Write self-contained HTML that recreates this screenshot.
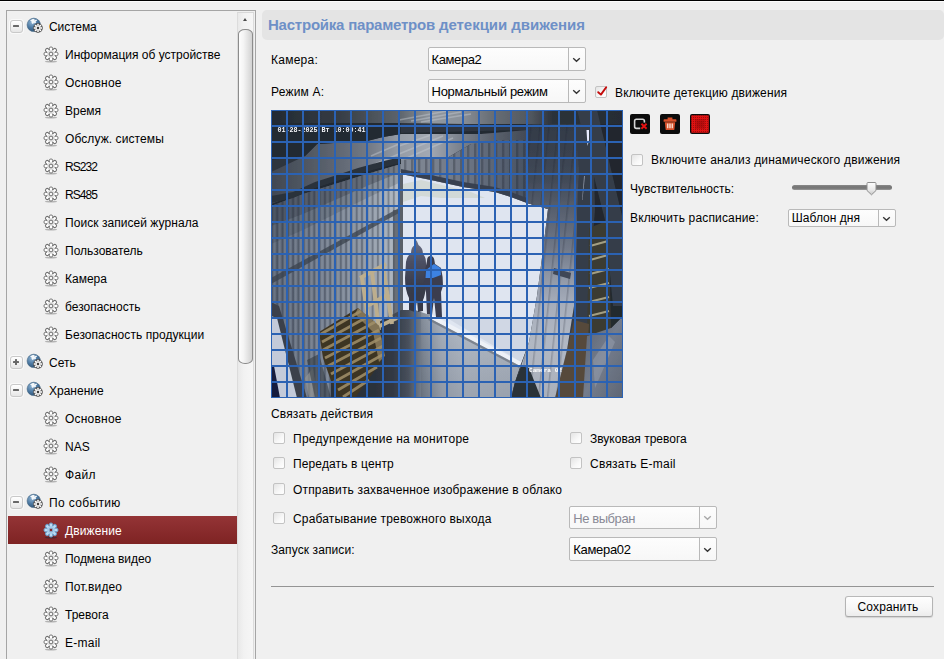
<!DOCTYPE html>
<html>
<head>
<meta charset="utf-8">
<title>Motion detection</title>
<style>
*{box-sizing:border-box;margin:0;padding:0}
html,body{width:944px;height:659px;overflow:hidden;background:#f0f0f0}
body{position:relative;font-family:"Liberation Sans",sans-serif;font-size:12px;color:#000}
.abs{position:absolute}
#topline{left:0;top:0;width:944px;height:1px;background:#000}
#topline2{left:0;top:1px;width:944px;height:1px;background:#fcfcfc}
#tree{left:6px;top:10px;width:250px;height:660px;border:1px solid #a5a5a5;background:#f0f0f0}
.row{position:absolute;left:8px;width:229px;height:28px;line-height:28px;white-space:nowrap;font-size:12px}
.row .t{position:absolute;top:1px}
.row.p .t{left:41px}
.row.c .t{left:57px}
.row.sel{background:linear-gradient(#943436,#7e2323);color:#fff}
.tg{position:absolute;left:1.5px;top:7.5px;width:13px;height:13px;border:1px solid #c9c9c9;border-radius:3px;background:linear-gradient(#ffffff,#f3f3f3 50%,#e6e6e6);box-shadow:0 0 0 1px rgba(255,255,255,.6)}
.tg i{position:absolute;left:2.5px;top:4.5px;width:6px;height:2px;background:#686868;border-radius:.5px}
.tg b{position:absolute;left:4.5px;top:2.5px;width:2px;height:6px;background:#686868;border-radius:.5px}
.gl{position:absolute;left:17px;top:4px;width:20px;height:19px}
.ge{position:absolute;left:35px;top:6px;width:16px;height:17px}
#sbtrack{left:237px;top:12px;width:17px;height:650px;background:linear-gradient(90deg,#e9e9e9,#f2f2f2 40%,#f6f6f6);border-left:1px solid #dcdcdc;border-right:1px solid #dcdcdc}
#sbtop{left:237px;top:12px;width:17px;height:1px;background:#d8d8d8}
#sbthumb{left:238px;top:29px;width:15px;height:335px;border:1px solid #8c8c8c;border-radius:7px/5px;background:linear-gradient(90deg,#fdfdfd,#f4f4f4 35%,#dadada 85%,#d2d2d2)}
#sbarrow{left:243px;top:18px;width:0;height:0;border-left:2.5px solid transparent;border-right:2.5px solid transparent;border-bottom:3px solid #4a4a4a}
#title{left:262px;top:10px;width:682px;height:30px;background:#e4e4e4;border-radius:5px;}
#title span{position:absolute;left:6px;top:0;line-height:30px;font-size:15px;font-weight:bold;color:#6e90c7;white-space:nowrap;letter-spacing:-0.03px}
#title span b{font-weight:bold;letter-spacing:-0.225px}
.lbl{position:absolute;white-space:nowrap;font-size:12px;line-height:14px}
.sel2{position:absolute;height:24px;border:1px solid #b9b9b9;border-radius:2px;background:linear-gradient(#fdfdfd,#f7f7f7)}
.sel2 .v{position:absolute;left:3px;top:0;line-height:22px;font-size:12px;white-space:nowrap}
.sel2 .d{position:absolute;right:16px;top:0;width:1px;height:22px;background:#b9b9b9}
.sel2 .ch{position:absolute;right:4px;width:9px;height:6px;line-height:0}
.sel2 svg{display:block}
.cb{position:absolute;width:12px;height:12px;border:1px solid #c3c3c3;border-radius:2px;background:linear-gradient(135deg,#e4e4e4,#f8f8f8 60%,#fff)}
#cam{left:271px;top:110px;width:352px;height:288px;overflow:hidden;background:#2a3038}
#hr{left:271px;top:586px;width:663px;height:1px;background:#949494}
#save{left:845px;top:596px;width:88px;height:21px;border:1px solid #b4b4b4;border-radius:3px;background:linear-gradient(#fefefe,#f6f6f6 60%,#ececec);text-align:center;line-height:21px;font-size:12px;letter-spacing:.15px;padding-right:2px;box-shadow:0 1px 1px rgba(0,0,0,.12);border-color:#b9b9b9 #b4b4b4 #a8a8a8}
.ib{position:absolute;top:114px;width:20px;height:20px;background:#0c0c0c;border-radius:2px}
</style>
</head>
<body>
<div class="abs" id="topline"></div>
<div class="abs" id="topline2"></div>

<!-- LEFT TREE -->
<div class="abs" id="tree"></div>
<svg width="0" height="0" style="position:absolute"><defs><linearGradient id="gg" x1="0" y1="0" x2="0" y2="1"><stop offset="0" stop-color="#fff"/><stop offset="1" stop-color="#e2e2e2"/></linearGradient><radialGradient id="gb" cx=".35" cy=".3" r=".8"><stop offset="0" stop-color="#8fb3d2"/><stop offset=".5" stop-color="#4d7aa3"/><stop offset="1" stop-color="#2c4d6e"/></radialGradient></defs></svg>
<div class="row p" style="top:12px"><div class="tg"><i></i></div><svg class="gl" viewBox="0 0 20 19" width="20" height="19"><circle cx="8.8" cy="8.9" r="6.7" fill="url(#gb)" stroke="#3e617f" stroke-width=".6"/><path d="M5.0 4.6 L7.6 2.9 L9.6 3.1 L9.2 4.6 L11.2 3.6 L12.2 4.6 L10.6 5.6 L11.2 6.6 L9.6 7.4 L9.0 6.4 L8.0 8.2 L6.6 7.0 L6.6 5.6 Z" fill="#fff" opacity=".92"/><circle cx="13" cy="12" r="4.7" fill="#3a3a3a"/><rect x="11.85" y="7.50" width="2.30" height="2.70" rx="1.00" fill="#ffffff" stroke="#3a3a3a" stroke-width="0.50" transform="rotate(0.0 13.00 12.00)"/><rect x="11.85" y="7.50" width="2.30" height="2.70" rx="1.00" fill="#ffffff" stroke="#3a3a3a" stroke-width="0.50" transform="rotate(45.0 13.00 12.00)"/><rect x="11.85" y="7.50" width="2.30" height="2.70" rx="1.00" fill="#ffffff" stroke="#3a3a3a" stroke-width="0.50" transform="rotate(90.0 13.00 12.00)"/><rect x="11.85" y="7.50" width="2.30" height="2.70" rx="1.00" fill="#ffffff" stroke="#3a3a3a" stroke-width="0.50" transform="rotate(135.0 13.00 12.00)"/><rect x="11.85" y="7.50" width="2.30" height="2.70" rx="1.00" fill="#ffffff" stroke="#3a3a3a" stroke-width="0.50" transform="rotate(180.0 13.00 12.00)"/><rect x="11.85" y="7.50" width="2.30" height="2.70" rx="1.00" fill="#ffffff" stroke="#3a3a3a" stroke-width="0.50" transform="rotate(225.0 13.00 12.00)"/><rect x="11.85" y="7.50" width="2.30" height="2.70" rx="1.00" fill="#ffffff" stroke="#3a3a3a" stroke-width="0.50" transform="rotate(270.0 13.00 12.00)"/><rect x="11.85" y="7.50" width="2.30" height="2.70" rx="1.00" fill="#ffffff" stroke="#3a3a3a" stroke-width="0.50" transform="rotate(315.0 13.00 12.00)"/><circle cx="13" cy="12" r="2.7" fill="#ececec"/><circle cx="13" cy="12" r="1.2" fill="#3c3c3c"/></svg><span class="t" style="letter-spacing:-0.1px">Система</span></div>
<div class="row c" style="top:40px"><svg class="ge" viewBox="0 0 16 17" width="16" height="17"><ellipse cx="8" cy="15.7" rx="6.2" ry="0.9" fill="#000" opacity=".25"/><circle cx="8" cy="8" r="5.6" fill="#707070" opacity=".55"/><rect x="6.30" y="1.00" width="3.40" height="4.40" rx="1.50" fill="#ffffff" stroke="#707070" stroke-width="1.00" transform="rotate(0.0 8.00 8.00)"/><rect x="6.30" y="1.00" width="3.40" height="4.40" rx="1.50" fill="#ffffff" stroke="#707070" stroke-width="1.00" transform="rotate(45.0 8.00 8.00)"/><rect x="6.30" y="1.00" width="3.40" height="4.40" rx="1.50" fill="#ffffff" stroke="#707070" stroke-width="1.00" transform="rotate(90.0 8.00 8.00)"/><rect x="6.30" y="1.00" width="3.40" height="4.40" rx="1.50" fill="#ffffff" stroke="#707070" stroke-width="1.00" transform="rotate(135.0 8.00 8.00)"/><rect x="6.30" y="1.00" width="3.40" height="4.40" rx="1.50" fill="#ffffff" stroke="#707070" stroke-width="1.00" transform="rotate(180.0 8.00 8.00)"/><rect x="6.30" y="1.00" width="3.40" height="4.40" rx="1.50" fill="#ffffff" stroke="#707070" stroke-width="1.00" transform="rotate(225.0 8.00 8.00)"/><rect x="6.30" y="1.00" width="3.40" height="4.40" rx="1.50" fill="#ffffff" stroke="#707070" stroke-width="1.00" transform="rotate(270.0 8.00 8.00)"/><rect x="6.30" y="1.00" width="3.40" height="4.40" rx="1.50" fill="#ffffff" stroke="#707070" stroke-width="1.00" transform="rotate(315.0 8.00 8.00)"/><circle cx="8" cy="8" r="3.9" fill="#e4e4e4"/><circle cx="8" cy="8" r="1.9" fill="#f6f6f6" stroke="#6a6a6a" stroke-width="1"/></svg><span class="t" style="letter-spacing:0px">Информация об устройстве</span></div>
<div class="row c" style="top:68px"><svg class="ge" viewBox="0 0 16 17" width="16" height="17"><ellipse cx="8" cy="15.7" rx="6.2" ry="0.9" fill="#000" opacity=".25"/><circle cx="8" cy="8" r="5.6" fill="#707070" opacity=".55"/><rect x="6.30" y="1.00" width="3.40" height="4.40" rx="1.50" fill="#ffffff" stroke="#707070" stroke-width="1.00" transform="rotate(0.0 8.00 8.00)"/><rect x="6.30" y="1.00" width="3.40" height="4.40" rx="1.50" fill="#ffffff" stroke="#707070" stroke-width="1.00" transform="rotate(45.0 8.00 8.00)"/><rect x="6.30" y="1.00" width="3.40" height="4.40" rx="1.50" fill="#ffffff" stroke="#707070" stroke-width="1.00" transform="rotate(90.0 8.00 8.00)"/><rect x="6.30" y="1.00" width="3.40" height="4.40" rx="1.50" fill="#ffffff" stroke="#707070" stroke-width="1.00" transform="rotate(135.0 8.00 8.00)"/><rect x="6.30" y="1.00" width="3.40" height="4.40" rx="1.50" fill="#ffffff" stroke="#707070" stroke-width="1.00" transform="rotate(180.0 8.00 8.00)"/><rect x="6.30" y="1.00" width="3.40" height="4.40" rx="1.50" fill="#ffffff" stroke="#707070" stroke-width="1.00" transform="rotate(225.0 8.00 8.00)"/><rect x="6.30" y="1.00" width="3.40" height="4.40" rx="1.50" fill="#ffffff" stroke="#707070" stroke-width="1.00" transform="rotate(270.0 8.00 8.00)"/><rect x="6.30" y="1.00" width="3.40" height="4.40" rx="1.50" fill="#ffffff" stroke="#707070" stroke-width="1.00" transform="rotate(315.0 8.00 8.00)"/><circle cx="8" cy="8" r="3.9" fill="#e4e4e4"/><circle cx="8" cy="8" r="1.9" fill="#f6f6f6" stroke="#6a6a6a" stroke-width="1"/></svg><span class="t" style="letter-spacing:0.22px">Основное</span></div>
<div class="row c" style="top:96px"><svg class="ge" viewBox="0 0 16 17" width="16" height="17"><ellipse cx="8" cy="15.7" rx="6.2" ry="0.9" fill="#000" opacity=".25"/><circle cx="8" cy="8" r="5.6" fill="#707070" opacity=".55"/><rect x="6.30" y="1.00" width="3.40" height="4.40" rx="1.50" fill="#ffffff" stroke="#707070" stroke-width="1.00" transform="rotate(0.0 8.00 8.00)"/><rect x="6.30" y="1.00" width="3.40" height="4.40" rx="1.50" fill="#ffffff" stroke="#707070" stroke-width="1.00" transform="rotate(45.0 8.00 8.00)"/><rect x="6.30" y="1.00" width="3.40" height="4.40" rx="1.50" fill="#ffffff" stroke="#707070" stroke-width="1.00" transform="rotate(90.0 8.00 8.00)"/><rect x="6.30" y="1.00" width="3.40" height="4.40" rx="1.50" fill="#ffffff" stroke="#707070" stroke-width="1.00" transform="rotate(135.0 8.00 8.00)"/><rect x="6.30" y="1.00" width="3.40" height="4.40" rx="1.50" fill="#ffffff" stroke="#707070" stroke-width="1.00" transform="rotate(180.0 8.00 8.00)"/><rect x="6.30" y="1.00" width="3.40" height="4.40" rx="1.50" fill="#ffffff" stroke="#707070" stroke-width="1.00" transform="rotate(225.0 8.00 8.00)"/><rect x="6.30" y="1.00" width="3.40" height="4.40" rx="1.50" fill="#ffffff" stroke="#707070" stroke-width="1.00" transform="rotate(270.0 8.00 8.00)"/><rect x="6.30" y="1.00" width="3.40" height="4.40" rx="1.50" fill="#ffffff" stroke="#707070" stroke-width="1.00" transform="rotate(315.0 8.00 8.00)"/><circle cx="8" cy="8" r="3.9" fill="#e4e4e4"/><circle cx="8" cy="8" r="1.9" fill="#f6f6f6" stroke="#6a6a6a" stroke-width="1"/></svg><span class="t" style="letter-spacing:0px">Время</span></div>
<div class="row c" style="top:124px"><svg class="ge" viewBox="0 0 16 17" width="16" height="17"><ellipse cx="8" cy="15.7" rx="6.2" ry="0.9" fill="#000" opacity=".25"/><circle cx="8" cy="8" r="5.6" fill="#707070" opacity=".55"/><rect x="6.30" y="1.00" width="3.40" height="4.40" rx="1.50" fill="#ffffff" stroke="#707070" stroke-width="1.00" transform="rotate(0.0 8.00 8.00)"/><rect x="6.30" y="1.00" width="3.40" height="4.40" rx="1.50" fill="#ffffff" stroke="#707070" stroke-width="1.00" transform="rotate(45.0 8.00 8.00)"/><rect x="6.30" y="1.00" width="3.40" height="4.40" rx="1.50" fill="#ffffff" stroke="#707070" stroke-width="1.00" transform="rotate(90.0 8.00 8.00)"/><rect x="6.30" y="1.00" width="3.40" height="4.40" rx="1.50" fill="#ffffff" stroke="#707070" stroke-width="1.00" transform="rotate(135.0 8.00 8.00)"/><rect x="6.30" y="1.00" width="3.40" height="4.40" rx="1.50" fill="#ffffff" stroke="#707070" stroke-width="1.00" transform="rotate(180.0 8.00 8.00)"/><rect x="6.30" y="1.00" width="3.40" height="4.40" rx="1.50" fill="#ffffff" stroke="#707070" stroke-width="1.00" transform="rotate(225.0 8.00 8.00)"/><rect x="6.30" y="1.00" width="3.40" height="4.40" rx="1.50" fill="#ffffff" stroke="#707070" stroke-width="1.00" transform="rotate(270.0 8.00 8.00)"/><rect x="6.30" y="1.00" width="3.40" height="4.40" rx="1.50" fill="#ffffff" stroke="#707070" stroke-width="1.00" transform="rotate(315.0 8.00 8.00)"/><circle cx="8" cy="8" r="3.9" fill="#e4e4e4"/><circle cx="8" cy="8" r="1.9" fill="#f6f6f6" stroke="#6a6a6a" stroke-width="1"/></svg><span class="t" style="letter-spacing:0.09px">Обслуж. системы</span></div>
<div class="row c" style="top:152px"><svg class="ge" viewBox="0 0 16 17" width="16" height="17"><ellipse cx="8" cy="15.7" rx="6.2" ry="0.9" fill="#000" opacity=".25"/><circle cx="8" cy="8" r="5.6" fill="#707070" opacity=".55"/><rect x="6.30" y="1.00" width="3.40" height="4.40" rx="1.50" fill="#ffffff" stroke="#707070" stroke-width="1.00" transform="rotate(0.0 8.00 8.00)"/><rect x="6.30" y="1.00" width="3.40" height="4.40" rx="1.50" fill="#ffffff" stroke="#707070" stroke-width="1.00" transform="rotate(45.0 8.00 8.00)"/><rect x="6.30" y="1.00" width="3.40" height="4.40" rx="1.50" fill="#ffffff" stroke="#707070" stroke-width="1.00" transform="rotate(90.0 8.00 8.00)"/><rect x="6.30" y="1.00" width="3.40" height="4.40" rx="1.50" fill="#ffffff" stroke="#707070" stroke-width="1.00" transform="rotate(135.0 8.00 8.00)"/><rect x="6.30" y="1.00" width="3.40" height="4.40" rx="1.50" fill="#ffffff" stroke="#707070" stroke-width="1.00" transform="rotate(180.0 8.00 8.00)"/><rect x="6.30" y="1.00" width="3.40" height="4.40" rx="1.50" fill="#ffffff" stroke="#707070" stroke-width="1.00" transform="rotate(225.0 8.00 8.00)"/><rect x="6.30" y="1.00" width="3.40" height="4.40" rx="1.50" fill="#ffffff" stroke="#707070" stroke-width="1.00" transform="rotate(270.0 8.00 8.00)"/><rect x="6.30" y="1.00" width="3.40" height="4.40" rx="1.50" fill="#ffffff" stroke="#707070" stroke-width="1.00" transform="rotate(315.0 8.00 8.00)"/><circle cx="8" cy="8" r="3.9" fill="#e4e4e4"/><circle cx="8" cy="8" r="1.9" fill="#f6f6f6" stroke="#6a6a6a" stroke-width="1"/></svg><span class="t" style="letter-spacing:-0.95px">RS232</span></div>
<div class="row c" style="top:180px"><svg class="ge" viewBox="0 0 16 17" width="16" height="17"><ellipse cx="8" cy="15.7" rx="6.2" ry="0.9" fill="#000" opacity=".25"/><circle cx="8" cy="8" r="5.6" fill="#707070" opacity=".55"/><rect x="6.30" y="1.00" width="3.40" height="4.40" rx="1.50" fill="#ffffff" stroke="#707070" stroke-width="1.00" transform="rotate(0.0 8.00 8.00)"/><rect x="6.30" y="1.00" width="3.40" height="4.40" rx="1.50" fill="#ffffff" stroke="#707070" stroke-width="1.00" transform="rotate(45.0 8.00 8.00)"/><rect x="6.30" y="1.00" width="3.40" height="4.40" rx="1.50" fill="#ffffff" stroke="#707070" stroke-width="1.00" transform="rotate(90.0 8.00 8.00)"/><rect x="6.30" y="1.00" width="3.40" height="4.40" rx="1.50" fill="#ffffff" stroke="#707070" stroke-width="1.00" transform="rotate(135.0 8.00 8.00)"/><rect x="6.30" y="1.00" width="3.40" height="4.40" rx="1.50" fill="#ffffff" stroke="#707070" stroke-width="1.00" transform="rotate(180.0 8.00 8.00)"/><rect x="6.30" y="1.00" width="3.40" height="4.40" rx="1.50" fill="#ffffff" stroke="#707070" stroke-width="1.00" transform="rotate(225.0 8.00 8.00)"/><rect x="6.30" y="1.00" width="3.40" height="4.40" rx="1.50" fill="#ffffff" stroke="#707070" stroke-width="1.00" transform="rotate(270.0 8.00 8.00)"/><rect x="6.30" y="1.00" width="3.40" height="4.40" rx="1.50" fill="#ffffff" stroke="#707070" stroke-width="1.00" transform="rotate(315.0 8.00 8.00)"/><circle cx="8" cy="8" r="3.9" fill="#e4e4e4"/><circle cx="8" cy="8" r="1.9" fill="#f6f6f6" stroke="#6a6a6a" stroke-width="1"/></svg><span class="t" style="letter-spacing:-0.95px">RS485</span></div>
<div class="row c" style="top:208px"><svg class="ge" viewBox="0 0 16 17" width="16" height="17"><ellipse cx="8" cy="15.7" rx="6.2" ry="0.9" fill="#000" opacity=".25"/><circle cx="8" cy="8" r="5.6" fill="#707070" opacity=".55"/><rect x="6.30" y="1.00" width="3.40" height="4.40" rx="1.50" fill="#ffffff" stroke="#707070" stroke-width="1.00" transform="rotate(0.0 8.00 8.00)"/><rect x="6.30" y="1.00" width="3.40" height="4.40" rx="1.50" fill="#ffffff" stroke="#707070" stroke-width="1.00" transform="rotate(45.0 8.00 8.00)"/><rect x="6.30" y="1.00" width="3.40" height="4.40" rx="1.50" fill="#ffffff" stroke="#707070" stroke-width="1.00" transform="rotate(90.0 8.00 8.00)"/><rect x="6.30" y="1.00" width="3.40" height="4.40" rx="1.50" fill="#ffffff" stroke="#707070" stroke-width="1.00" transform="rotate(135.0 8.00 8.00)"/><rect x="6.30" y="1.00" width="3.40" height="4.40" rx="1.50" fill="#ffffff" stroke="#707070" stroke-width="1.00" transform="rotate(180.0 8.00 8.00)"/><rect x="6.30" y="1.00" width="3.40" height="4.40" rx="1.50" fill="#ffffff" stroke="#707070" stroke-width="1.00" transform="rotate(225.0 8.00 8.00)"/><rect x="6.30" y="1.00" width="3.40" height="4.40" rx="1.50" fill="#ffffff" stroke="#707070" stroke-width="1.00" transform="rotate(270.0 8.00 8.00)"/><rect x="6.30" y="1.00" width="3.40" height="4.40" rx="1.50" fill="#ffffff" stroke="#707070" stroke-width="1.00" transform="rotate(315.0 8.00 8.00)"/><circle cx="8" cy="8" r="3.9" fill="#e4e4e4"/><circle cx="8" cy="8" r="1.9" fill="#f6f6f6" stroke="#6a6a6a" stroke-width="1"/></svg><span class="t" style="letter-spacing:0.05px">Поиск записей журнала</span></div>
<div class="row c" style="top:236px"><svg class="ge" viewBox="0 0 16 17" width="16" height="17"><ellipse cx="8" cy="15.7" rx="6.2" ry="0.9" fill="#000" opacity=".25"/><circle cx="8" cy="8" r="5.6" fill="#707070" opacity=".55"/><rect x="6.30" y="1.00" width="3.40" height="4.40" rx="1.50" fill="#ffffff" stroke="#707070" stroke-width="1.00" transform="rotate(0.0 8.00 8.00)"/><rect x="6.30" y="1.00" width="3.40" height="4.40" rx="1.50" fill="#ffffff" stroke="#707070" stroke-width="1.00" transform="rotate(45.0 8.00 8.00)"/><rect x="6.30" y="1.00" width="3.40" height="4.40" rx="1.50" fill="#ffffff" stroke="#707070" stroke-width="1.00" transform="rotate(90.0 8.00 8.00)"/><rect x="6.30" y="1.00" width="3.40" height="4.40" rx="1.50" fill="#ffffff" stroke="#707070" stroke-width="1.00" transform="rotate(135.0 8.00 8.00)"/><rect x="6.30" y="1.00" width="3.40" height="4.40" rx="1.50" fill="#ffffff" stroke="#707070" stroke-width="1.00" transform="rotate(180.0 8.00 8.00)"/><rect x="6.30" y="1.00" width="3.40" height="4.40" rx="1.50" fill="#ffffff" stroke="#707070" stroke-width="1.00" transform="rotate(225.0 8.00 8.00)"/><rect x="6.30" y="1.00" width="3.40" height="4.40" rx="1.50" fill="#ffffff" stroke="#707070" stroke-width="1.00" transform="rotate(270.0 8.00 8.00)"/><rect x="6.30" y="1.00" width="3.40" height="4.40" rx="1.50" fill="#ffffff" stroke="#707070" stroke-width="1.00" transform="rotate(315.0 8.00 8.00)"/><circle cx="8" cy="8" r="3.9" fill="#e4e4e4"/><circle cx="8" cy="8" r="1.9" fill="#f6f6f6" stroke="#6a6a6a" stroke-width="1"/></svg><span class="t" style="letter-spacing:0px">Пользователь</span></div>
<div class="row c" style="top:264px"><svg class="ge" viewBox="0 0 16 17" width="16" height="17"><ellipse cx="8" cy="15.7" rx="6.2" ry="0.9" fill="#000" opacity=".25"/><circle cx="8" cy="8" r="5.6" fill="#707070" opacity=".55"/><rect x="6.30" y="1.00" width="3.40" height="4.40" rx="1.50" fill="#ffffff" stroke="#707070" stroke-width="1.00" transform="rotate(0.0 8.00 8.00)"/><rect x="6.30" y="1.00" width="3.40" height="4.40" rx="1.50" fill="#ffffff" stroke="#707070" stroke-width="1.00" transform="rotate(45.0 8.00 8.00)"/><rect x="6.30" y="1.00" width="3.40" height="4.40" rx="1.50" fill="#ffffff" stroke="#707070" stroke-width="1.00" transform="rotate(90.0 8.00 8.00)"/><rect x="6.30" y="1.00" width="3.40" height="4.40" rx="1.50" fill="#ffffff" stroke="#707070" stroke-width="1.00" transform="rotate(135.0 8.00 8.00)"/><rect x="6.30" y="1.00" width="3.40" height="4.40" rx="1.50" fill="#ffffff" stroke="#707070" stroke-width="1.00" transform="rotate(180.0 8.00 8.00)"/><rect x="6.30" y="1.00" width="3.40" height="4.40" rx="1.50" fill="#ffffff" stroke="#707070" stroke-width="1.00" transform="rotate(225.0 8.00 8.00)"/><rect x="6.30" y="1.00" width="3.40" height="4.40" rx="1.50" fill="#ffffff" stroke="#707070" stroke-width="1.00" transform="rotate(270.0 8.00 8.00)"/><rect x="6.30" y="1.00" width="3.40" height="4.40" rx="1.50" fill="#ffffff" stroke="#707070" stroke-width="1.00" transform="rotate(315.0 8.00 8.00)"/><circle cx="8" cy="8" r="3.9" fill="#e4e4e4"/><circle cx="8" cy="8" r="1.9" fill="#f6f6f6" stroke="#6a6a6a" stroke-width="1"/></svg><span class="t" style="letter-spacing:0px">Камера</span></div>
<div class="row c" style="top:292px"><svg class="ge" viewBox="0 0 16 17" width="16" height="17"><ellipse cx="8" cy="15.7" rx="6.2" ry="0.9" fill="#000" opacity=".25"/><circle cx="8" cy="8" r="5.6" fill="#707070" opacity=".55"/><rect x="6.30" y="1.00" width="3.40" height="4.40" rx="1.50" fill="#ffffff" stroke="#707070" stroke-width="1.00" transform="rotate(0.0 8.00 8.00)"/><rect x="6.30" y="1.00" width="3.40" height="4.40" rx="1.50" fill="#ffffff" stroke="#707070" stroke-width="1.00" transform="rotate(45.0 8.00 8.00)"/><rect x="6.30" y="1.00" width="3.40" height="4.40" rx="1.50" fill="#ffffff" stroke="#707070" stroke-width="1.00" transform="rotate(90.0 8.00 8.00)"/><rect x="6.30" y="1.00" width="3.40" height="4.40" rx="1.50" fill="#ffffff" stroke="#707070" stroke-width="1.00" transform="rotate(135.0 8.00 8.00)"/><rect x="6.30" y="1.00" width="3.40" height="4.40" rx="1.50" fill="#ffffff" stroke="#707070" stroke-width="1.00" transform="rotate(180.0 8.00 8.00)"/><rect x="6.30" y="1.00" width="3.40" height="4.40" rx="1.50" fill="#ffffff" stroke="#707070" stroke-width="1.00" transform="rotate(225.0 8.00 8.00)"/><rect x="6.30" y="1.00" width="3.40" height="4.40" rx="1.50" fill="#ffffff" stroke="#707070" stroke-width="1.00" transform="rotate(270.0 8.00 8.00)"/><rect x="6.30" y="1.00" width="3.40" height="4.40" rx="1.50" fill="#ffffff" stroke="#707070" stroke-width="1.00" transform="rotate(315.0 8.00 8.00)"/><circle cx="8" cy="8" r="3.9" fill="#e4e4e4"/><circle cx="8" cy="8" r="1.9" fill="#f6f6f6" stroke="#6a6a6a" stroke-width="1"/></svg><span class="t" style="letter-spacing:0px">безопасность</span></div>
<div class="row c" style="top:320px"><svg class="ge" viewBox="0 0 16 17" width="16" height="17"><ellipse cx="8" cy="15.7" rx="6.2" ry="0.9" fill="#000" opacity=".25"/><circle cx="8" cy="8" r="5.6" fill="#707070" opacity=".55"/><rect x="6.30" y="1.00" width="3.40" height="4.40" rx="1.50" fill="#ffffff" stroke="#707070" stroke-width="1.00" transform="rotate(0.0 8.00 8.00)"/><rect x="6.30" y="1.00" width="3.40" height="4.40" rx="1.50" fill="#ffffff" stroke="#707070" stroke-width="1.00" transform="rotate(45.0 8.00 8.00)"/><rect x="6.30" y="1.00" width="3.40" height="4.40" rx="1.50" fill="#ffffff" stroke="#707070" stroke-width="1.00" transform="rotate(90.0 8.00 8.00)"/><rect x="6.30" y="1.00" width="3.40" height="4.40" rx="1.50" fill="#ffffff" stroke="#707070" stroke-width="1.00" transform="rotate(135.0 8.00 8.00)"/><rect x="6.30" y="1.00" width="3.40" height="4.40" rx="1.50" fill="#ffffff" stroke="#707070" stroke-width="1.00" transform="rotate(180.0 8.00 8.00)"/><rect x="6.30" y="1.00" width="3.40" height="4.40" rx="1.50" fill="#ffffff" stroke="#707070" stroke-width="1.00" transform="rotate(225.0 8.00 8.00)"/><rect x="6.30" y="1.00" width="3.40" height="4.40" rx="1.50" fill="#ffffff" stroke="#707070" stroke-width="1.00" transform="rotate(270.0 8.00 8.00)"/><rect x="6.30" y="1.00" width="3.40" height="4.40" rx="1.50" fill="#ffffff" stroke="#707070" stroke-width="1.00" transform="rotate(315.0 8.00 8.00)"/><circle cx="8" cy="8" r="3.9" fill="#e4e4e4"/><circle cx="8" cy="8" r="1.9" fill="#f6f6f6" stroke="#6a6a6a" stroke-width="1"/></svg><span class="t" style="letter-spacing:0.06px">Безопасность продукции</span></div>
<div class="row p" style="top:348px"><div class="tg"><i></i><b></b></div><svg class="gl" viewBox="0 0 20 19" width="20" height="19"><circle cx="8.8" cy="8.9" r="6.7" fill="url(#gb)" stroke="#3e617f" stroke-width=".6"/><path d="M5.0 4.6 L7.6 2.9 L9.6 3.1 L9.2 4.6 L11.2 3.6 L12.2 4.6 L10.6 5.6 L11.2 6.6 L9.6 7.4 L9.0 6.4 L8.0 8.2 L6.6 7.0 L6.6 5.6 Z" fill="#fff" opacity=".92"/><circle cx="13" cy="12" r="4.7" fill="#3a3a3a"/><rect x="11.85" y="7.50" width="2.30" height="2.70" rx="1.00" fill="#ffffff" stroke="#3a3a3a" stroke-width="0.50" transform="rotate(0.0 13.00 12.00)"/><rect x="11.85" y="7.50" width="2.30" height="2.70" rx="1.00" fill="#ffffff" stroke="#3a3a3a" stroke-width="0.50" transform="rotate(45.0 13.00 12.00)"/><rect x="11.85" y="7.50" width="2.30" height="2.70" rx="1.00" fill="#ffffff" stroke="#3a3a3a" stroke-width="0.50" transform="rotate(90.0 13.00 12.00)"/><rect x="11.85" y="7.50" width="2.30" height="2.70" rx="1.00" fill="#ffffff" stroke="#3a3a3a" stroke-width="0.50" transform="rotate(135.0 13.00 12.00)"/><rect x="11.85" y="7.50" width="2.30" height="2.70" rx="1.00" fill="#ffffff" stroke="#3a3a3a" stroke-width="0.50" transform="rotate(180.0 13.00 12.00)"/><rect x="11.85" y="7.50" width="2.30" height="2.70" rx="1.00" fill="#ffffff" stroke="#3a3a3a" stroke-width="0.50" transform="rotate(225.0 13.00 12.00)"/><rect x="11.85" y="7.50" width="2.30" height="2.70" rx="1.00" fill="#ffffff" stroke="#3a3a3a" stroke-width="0.50" transform="rotate(270.0 13.00 12.00)"/><rect x="11.85" y="7.50" width="2.30" height="2.70" rx="1.00" fill="#ffffff" stroke="#3a3a3a" stroke-width="0.50" transform="rotate(315.0 13.00 12.00)"/><circle cx="13" cy="12" r="2.7" fill="#ececec"/><circle cx="13" cy="12" r="1.2" fill="#3c3c3c"/></svg><span class="t" style="letter-spacing:0px">Сеть</span></div>
<div class="row p" style="top:376px"><div class="tg"><i></i></div><svg class="gl" viewBox="0 0 20 19" width="20" height="19"><circle cx="8.8" cy="8.9" r="6.7" fill="url(#gb)" stroke="#3e617f" stroke-width=".6"/><path d="M5.0 4.6 L7.6 2.9 L9.6 3.1 L9.2 4.6 L11.2 3.6 L12.2 4.6 L10.6 5.6 L11.2 6.6 L9.6 7.4 L9.0 6.4 L8.0 8.2 L6.6 7.0 L6.6 5.6 Z" fill="#fff" opacity=".92"/><circle cx="13" cy="12" r="4.7" fill="#3a3a3a"/><rect x="11.85" y="7.50" width="2.30" height="2.70" rx="1.00" fill="#ffffff" stroke="#3a3a3a" stroke-width="0.50" transform="rotate(0.0 13.00 12.00)"/><rect x="11.85" y="7.50" width="2.30" height="2.70" rx="1.00" fill="#ffffff" stroke="#3a3a3a" stroke-width="0.50" transform="rotate(45.0 13.00 12.00)"/><rect x="11.85" y="7.50" width="2.30" height="2.70" rx="1.00" fill="#ffffff" stroke="#3a3a3a" stroke-width="0.50" transform="rotate(90.0 13.00 12.00)"/><rect x="11.85" y="7.50" width="2.30" height="2.70" rx="1.00" fill="#ffffff" stroke="#3a3a3a" stroke-width="0.50" transform="rotate(135.0 13.00 12.00)"/><rect x="11.85" y="7.50" width="2.30" height="2.70" rx="1.00" fill="#ffffff" stroke="#3a3a3a" stroke-width="0.50" transform="rotate(180.0 13.00 12.00)"/><rect x="11.85" y="7.50" width="2.30" height="2.70" rx="1.00" fill="#ffffff" stroke="#3a3a3a" stroke-width="0.50" transform="rotate(225.0 13.00 12.00)"/><rect x="11.85" y="7.50" width="2.30" height="2.70" rx="1.00" fill="#ffffff" stroke="#3a3a3a" stroke-width="0.50" transform="rotate(270.0 13.00 12.00)"/><rect x="11.85" y="7.50" width="2.30" height="2.70" rx="1.00" fill="#ffffff" stroke="#3a3a3a" stroke-width="0.50" transform="rotate(315.0 13.00 12.00)"/><circle cx="13" cy="12" r="2.7" fill="#ececec"/><circle cx="13" cy="12" r="1.2" fill="#3c3c3c"/></svg><span class="t" style="letter-spacing:0px">Хранение</span></div>
<div class="row c" style="top:404px"><svg class="ge" viewBox="0 0 16 17" width="16" height="17"><ellipse cx="8" cy="15.7" rx="6.2" ry="0.9" fill="#000" opacity=".25"/><circle cx="8" cy="8" r="5.6" fill="#707070" opacity=".55"/><rect x="6.30" y="1.00" width="3.40" height="4.40" rx="1.50" fill="#ffffff" stroke="#707070" stroke-width="1.00" transform="rotate(0.0 8.00 8.00)"/><rect x="6.30" y="1.00" width="3.40" height="4.40" rx="1.50" fill="#ffffff" stroke="#707070" stroke-width="1.00" transform="rotate(45.0 8.00 8.00)"/><rect x="6.30" y="1.00" width="3.40" height="4.40" rx="1.50" fill="#ffffff" stroke="#707070" stroke-width="1.00" transform="rotate(90.0 8.00 8.00)"/><rect x="6.30" y="1.00" width="3.40" height="4.40" rx="1.50" fill="#ffffff" stroke="#707070" stroke-width="1.00" transform="rotate(135.0 8.00 8.00)"/><rect x="6.30" y="1.00" width="3.40" height="4.40" rx="1.50" fill="#ffffff" stroke="#707070" stroke-width="1.00" transform="rotate(180.0 8.00 8.00)"/><rect x="6.30" y="1.00" width="3.40" height="4.40" rx="1.50" fill="#ffffff" stroke="#707070" stroke-width="1.00" transform="rotate(225.0 8.00 8.00)"/><rect x="6.30" y="1.00" width="3.40" height="4.40" rx="1.50" fill="#ffffff" stroke="#707070" stroke-width="1.00" transform="rotate(270.0 8.00 8.00)"/><rect x="6.30" y="1.00" width="3.40" height="4.40" rx="1.50" fill="#ffffff" stroke="#707070" stroke-width="1.00" transform="rotate(315.0 8.00 8.00)"/><circle cx="8" cy="8" r="3.9" fill="#e4e4e4"/><circle cx="8" cy="8" r="1.9" fill="#f6f6f6" stroke="#6a6a6a" stroke-width="1"/></svg><span class="t" style="letter-spacing:0.22px">Основное</span></div>
<div class="row c" style="top:432px"><svg class="ge" viewBox="0 0 16 17" width="16" height="17"><ellipse cx="8" cy="15.7" rx="6.2" ry="0.9" fill="#000" opacity=".25"/><circle cx="8" cy="8" r="5.6" fill="#707070" opacity=".55"/><rect x="6.30" y="1.00" width="3.40" height="4.40" rx="1.50" fill="#ffffff" stroke="#707070" stroke-width="1.00" transform="rotate(0.0 8.00 8.00)"/><rect x="6.30" y="1.00" width="3.40" height="4.40" rx="1.50" fill="#ffffff" stroke="#707070" stroke-width="1.00" transform="rotate(45.0 8.00 8.00)"/><rect x="6.30" y="1.00" width="3.40" height="4.40" rx="1.50" fill="#ffffff" stroke="#707070" stroke-width="1.00" transform="rotate(90.0 8.00 8.00)"/><rect x="6.30" y="1.00" width="3.40" height="4.40" rx="1.50" fill="#ffffff" stroke="#707070" stroke-width="1.00" transform="rotate(135.0 8.00 8.00)"/><rect x="6.30" y="1.00" width="3.40" height="4.40" rx="1.50" fill="#ffffff" stroke="#707070" stroke-width="1.00" transform="rotate(180.0 8.00 8.00)"/><rect x="6.30" y="1.00" width="3.40" height="4.40" rx="1.50" fill="#ffffff" stroke="#707070" stroke-width="1.00" transform="rotate(225.0 8.00 8.00)"/><rect x="6.30" y="1.00" width="3.40" height="4.40" rx="1.50" fill="#ffffff" stroke="#707070" stroke-width="1.00" transform="rotate(270.0 8.00 8.00)"/><rect x="6.30" y="1.00" width="3.40" height="4.40" rx="1.50" fill="#ffffff" stroke="#707070" stroke-width="1.00" transform="rotate(315.0 8.00 8.00)"/><circle cx="8" cy="8" r="3.9" fill="#e4e4e4"/><circle cx="8" cy="8" r="1.9" fill="#f6f6f6" stroke="#6a6a6a" stroke-width="1"/></svg><span class="t" style="letter-spacing:0px">NAS</span></div>
<div class="row c" style="top:460px"><svg class="ge" viewBox="0 0 16 17" width="16" height="17"><ellipse cx="8" cy="15.7" rx="6.2" ry="0.9" fill="#000" opacity=".25"/><circle cx="8" cy="8" r="5.6" fill="#707070" opacity=".55"/><rect x="6.30" y="1.00" width="3.40" height="4.40" rx="1.50" fill="#ffffff" stroke="#707070" stroke-width="1.00" transform="rotate(0.0 8.00 8.00)"/><rect x="6.30" y="1.00" width="3.40" height="4.40" rx="1.50" fill="#ffffff" stroke="#707070" stroke-width="1.00" transform="rotate(45.0 8.00 8.00)"/><rect x="6.30" y="1.00" width="3.40" height="4.40" rx="1.50" fill="#ffffff" stroke="#707070" stroke-width="1.00" transform="rotate(90.0 8.00 8.00)"/><rect x="6.30" y="1.00" width="3.40" height="4.40" rx="1.50" fill="#ffffff" stroke="#707070" stroke-width="1.00" transform="rotate(135.0 8.00 8.00)"/><rect x="6.30" y="1.00" width="3.40" height="4.40" rx="1.50" fill="#ffffff" stroke="#707070" stroke-width="1.00" transform="rotate(180.0 8.00 8.00)"/><rect x="6.30" y="1.00" width="3.40" height="4.40" rx="1.50" fill="#ffffff" stroke="#707070" stroke-width="1.00" transform="rotate(225.0 8.00 8.00)"/><rect x="6.30" y="1.00" width="3.40" height="4.40" rx="1.50" fill="#ffffff" stroke="#707070" stroke-width="1.00" transform="rotate(270.0 8.00 8.00)"/><rect x="6.30" y="1.00" width="3.40" height="4.40" rx="1.50" fill="#ffffff" stroke="#707070" stroke-width="1.00" transform="rotate(315.0 8.00 8.00)"/><circle cx="8" cy="8" r="3.9" fill="#e4e4e4"/><circle cx="8" cy="8" r="1.9" fill="#f6f6f6" stroke="#6a6a6a" stroke-width="1"/></svg><span class="t" style="letter-spacing:0.3px">Файл</span></div>
<div class="row p" style="top:488px"><div class="tg"><i></i></div><svg class="gl" viewBox="0 0 20 19" width="20" height="19"><circle cx="8.8" cy="8.9" r="6.7" fill="url(#gb)" stroke="#3e617f" stroke-width=".6"/><path d="M5.0 4.6 L7.6 2.9 L9.6 3.1 L9.2 4.6 L11.2 3.6 L12.2 4.6 L10.6 5.6 L11.2 6.6 L9.6 7.4 L9.0 6.4 L8.0 8.2 L6.6 7.0 L6.6 5.6 Z" fill="#fff" opacity=".92"/><circle cx="13" cy="12" r="4.7" fill="#3a3a3a"/><rect x="11.85" y="7.50" width="2.30" height="2.70" rx="1.00" fill="#ffffff" stroke="#3a3a3a" stroke-width="0.50" transform="rotate(0.0 13.00 12.00)"/><rect x="11.85" y="7.50" width="2.30" height="2.70" rx="1.00" fill="#ffffff" stroke="#3a3a3a" stroke-width="0.50" transform="rotate(45.0 13.00 12.00)"/><rect x="11.85" y="7.50" width="2.30" height="2.70" rx="1.00" fill="#ffffff" stroke="#3a3a3a" stroke-width="0.50" transform="rotate(90.0 13.00 12.00)"/><rect x="11.85" y="7.50" width="2.30" height="2.70" rx="1.00" fill="#ffffff" stroke="#3a3a3a" stroke-width="0.50" transform="rotate(135.0 13.00 12.00)"/><rect x="11.85" y="7.50" width="2.30" height="2.70" rx="1.00" fill="#ffffff" stroke="#3a3a3a" stroke-width="0.50" transform="rotate(180.0 13.00 12.00)"/><rect x="11.85" y="7.50" width="2.30" height="2.70" rx="1.00" fill="#ffffff" stroke="#3a3a3a" stroke-width="0.50" transform="rotate(225.0 13.00 12.00)"/><rect x="11.85" y="7.50" width="2.30" height="2.70" rx="1.00" fill="#ffffff" stroke="#3a3a3a" stroke-width="0.50" transform="rotate(270.0 13.00 12.00)"/><rect x="11.85" y="7.50" width="2.30" height="2.70" rx="1.00" fill="#ffffff" stroke="#3a3a3a" stroke-width="0.50" transform="rotate(315.0 13.00 12.00)"/><circle cx="13" cy="12" r="2.7" fill="#ececec"/><circle cx="13" cy="12" r="1.2" fill="#3c3c3c"/></svg><span class="t" style="letter-spacing:0.35px">По событию</span></div>
<div class="row c sel" style="top:516px"><svg class="ge" viewBox="0 0 16 17" width="16" height="17"><ellipse cx="8" cy="15.7" rx="6.2" ry="0.9" fill="#10283c" opacity=".45"/><circle cx="8" cy="8" r="5.6" fill="#6a9cc6" opacity=".55"/><rect x="6.30" y="1.00" width="3.40" height="4.40" rx="1.50" fill="#bddcf5" stroke="#6a9cc6" stroke-width="1.00" transform="rotate(0.0 8.00 8.00)"/><rect x="6.30" y="1.00" width="3.40" height="4.40" rx="1.50" fill="#bddcf5" stroke="#6a9cc6" stroke-width="1.00" transform="rotate(45.0 8.00 8.00)"/><rect x="6.30" y="1.00" width="3.40" height="4.40" rx="1.50" fill="#bddcf5" stroke="#6a9cc6" stroke-width="1.00" transform="rotate(90.0 8.00 8.00)"/><rect x="6.30" y="1.00" width="3.40" height="4.40" rx="1.50" fill="#bddcf5" stroke="#6a9cc6" stroke-width="1.00" transform="rotate(135.0 8.00 8.00)"/><rect x="6.30" y="1.00" width="3.40" height="4.40" rx="1.50" fill="#bddcf5" stroke="#6a9cc6" stroke-width="1.00" transform="rotate(180.0 8.00 8.00)"/><rect x="6.30" y="1.00" width="3.40" height="4.40" rx="1.50" fill="#bddcf5" stroke="#6a9cc6" stroke-width="1.00" transform="rotate(225.0 8.00 8.00)"/><rect x="6.30" y="1.00" width="3.40" height="4.40" rx="1.50" fill="#bddcf5" stroke="#6a9cc6" stroke-width="1.00" transform="rotate(270.0 8.00 8.00)"/><rect x="6.30" y="1.00" width="3.40" height="4.40" rx="1.50" fill="#bddcf5" stroke="#6a9cc6" stroke-width="1.00" transform="rotate(315.0 8.00 8.00)"/><circle cx="8" cy="8" r="3.9" fill="#a9cfec"/><circle cx="8" cy="8" r="1.9" fill="#86292b" stroke="#8dbbe0" stroke-width="1"/></svg><span class="t" style="letter-spacing:0.1px">Движение</span></div>
<div class="row c" style="top:544px"><svg class="ge" viewBox="0 0 16 17" width="16" height="17"><ellipse cx="8" cy="15.7" rx="6.2" ry="0.9" fill="#000" opacity=".25"/><circle cx="8" cy="8" r="5.6" fill="#707070" opacity=".55"/><rect x="6.30" y="1.00" width="3.40" height="4.40" rx="1.50" fill="#ffffff" stroke="#707070" stroke-width="1.00" transform="rotate(0.0 8.00 8.00)"/><rect x="6.30" y="1.00" width="3.40" height="4.40" rx="1.50" fill="#ffffff" stroke="#707070" stroke-width="1.00" transform="rotate(45.0 8.00 8.00)"/><rect x="6.30" y="1.00" width="3.40" height="4.40" rx="1.50" fill="#ffffff" stroke="#707070" stroke-width="1.00" transform="rotate(90.0 8.00 8.00)"/><rect x="6.30" y="1.00" width="3.40" height="4.40" rx="1.50" fill="#ffffff" stroke="#707070" stroke-width="1.00" transform="rotate(135.0 8.00 8.00)"/><rect x="6.30" y="1.00" width="3.40" height="4.40" rx="1.50" fill="#ffffff" stroke="#707070" stroke-width="1.00" transform="rotate(180.0 8.00 8.00)"/><rect x="6.30" y="1.00" width="3.40" height="4.40" rx="1.50" fill="#ffffff" stroke="#707070" stroke-width="1.00" transform="rotate(225.0 8.00 8.00)"/><rect x="6.30" y="1.00" width="3.40" height="4.40" rx="1.50" fill="#ffffff" stroke="#707070" stroke-width="1.00" transform="rotate(270.0 8.00 8.00)"/><rect x="6.30" y="1.00" width="3.40" height="4.40" rx="1.50" fill="#ffffff" stroke="#707070" stroke-width="1.00" transform="rotate(315.0 8.00 8.00)"/><circle cx="8" cy="8" r="3.9" fill="#e4e4e4"/><circle cx="8" cy="8" r="1.9" fill="#f6f6f6" stroke="#6a6a6a" stroke-width="1"/></svg><span class="t" style="letter-spacing:-0.07px">Подмена видео</span></div>
<div class="row c" style="top:572px"><svg class="ge" viewBox="0 0 16 17" width="16" height="17"><ellipse cx="8" cy="15.7" rx="6.2" ry="0.9" fill="#000" opacity=".25"/><circle cx="8" cy="8" r="5.6" fill="#707070" opacity=".55"/><rect x="6.30" y="1.00" width="3.40" height="4.40" rx="1.50" fill="#ffffff" stroke="#707070" stroke-width="1.00" transform="rotate(0.0 8.00 8.00)"/><rect x="6.30" y="1.00" width="3.40" height="4.40" rx="1.50" fill="#ffffff" stroke="#707070" stroke-width="1.00" transform="rotate(45.0 8.00 8.00)"/><rect x="6.30" y="1.00" width="3.40" height="4.40" rx="1.50" fill="#ffffff" stroke="#707070" stroke-width="1.00" transform="rotate(90.0 8.00 8.00)"/><rect x="6.30" y="1.00" width="3.40" height="4.40" rx="1.50" fill="#ffffff" stroke="#707070" stroke-width="1.00" transform="rotate(135.0 8.00 8.00)"/><rect x="6.30" y="1.00" width="3.40" height="4.40" rx="1.50" fill="#ffffff" stroke="#707070" stroke-width="1.00" transform="rotate(180.0 8.00 8.00)"/><rect x="6.30" y="1.00" width="3.40" height="4.40" rx="1.50" fill="#ffffff" stroke="#707070" stroke-width="1.00" transform="rotate(225.0 8.00 8.00)"/><rect x="6.30" y="1.00" width="3.40" height="4.40" rx="1.50" fill="#ffffff" stroke="#707070" stroke-width="1.00" transform="rotate(270.0 8.00 8.00)"/><rect x="6.30" y="1.00" width="3.40" height="4.40" rx="1.50" fill="#ffffff" stroke="#707070" stroke-width="1.00" transform="rotate(315.0 8.00 8.00)"/><circle cx="8" cy="8" r="3.9" fill="#e4e4e4"/><circle cx="8" cy="8" r="1.9" fill="#f6f6f6" stroke="#6a6a6a" stroke-width="1"/></svg><span class="t" style="letter-spacing:0.13px">Пот.видео</span></div>
<div class="row c" style="top:600px"><svg class="ge" viewBox="0 0 16 17" width="16" height="17"><ellipse cx="8" cy="15.7" rx="6.2" ry="0.9" fill="#000" opacity=".25"/><circle cx="8" cy="8" r="5.6" fill="#707070" opacity=".55"/><rect x="6.30" y="1.00" width="3.40" height="4.40" rx="1.50" fill="#ffffff" stroke="#707070" stroke-width="1.00" transform="rotate(0.0 8.00 8.00)"/><rect x="6.30" y="1.00" width="3.40" height="4.40" rx="1.50" fill="#ffffff" stroke="#707070" stroke-width="1.00" transform="rotate(45.0 8.00 8.00)"/><rect x="6.30" y="1.00" width="3.40" height="4.40" rx="1.50" fill="#ffffff" stroke="#707070" stroke-width="1.00" transform="rotate(90.0 8.00 8.00)"/><rect x="6.30" y="1.00" width="3.40" height="4.40" rx="1.50" fill="#ffffff" stroke="#707070" stroke-width="1.00" transform="rotate(135.0 8.00 8.00)"/><rect x="6.30" y="1.00" width="3.40" height="4.40" rx="1.50" fill="#ffffff" stroke="#707070" stroke-width="1.00" transform="rotate(180.0 8.00 8.00)"/><rect x="6.30" y="1.00" width="3.40" height="4.40" rx="1.50" fill="#ffffff" stroke="#707070" stroke-width="1.00" transform="rotate(225.0 8.00 8.00)"/><rect x="6.30" y="1.00" width="3.40" height="4.40" rx="1.50" fill="#ffffff" stroke="#707070" stroke-width="1.00" transform="rotate(270.0 8.00 8.00)"/><rect x="6.30" y="1.00" width="3.40" height="4.40" rx="1.50" fill="#ffffff" stroke="#707070" stroke-width="1.00" transform="rotate(315.0 8.00 8.00)"/><circle cx="8" cy="8" r="3.9" fill="#e4e4e4"/><circle cx="8" cy="8" r="1.9" fill="#f6f6f6" stroke="#6a6a6a" stroke-width="1"/></svg><span class="t" style="letter-spacing:0px">Тревога</span></div>
<div class="row c" style="top:628px"><svg class="ge" viewBox="0 0 16 17" width="16" height="17"><ellipse cx="8" cy="15.7" rx="6.2" ry="0.9" fill="#000" opacity=".25"/><circle cx="8" cy="8" r="5.6" fill="#707070" opacity=".55"/><rect x="6.30" y="1.00" width="3.40" height="4.40" rx="1.50" fill="#ffffff" stroke="#707070" stroke-width="1.00" transform="rotate(0.0 8.00 8.00)"/><rect x="6.30" y="1.00" width="3.40" height="4.40" rx="1.50" fill="#ffffff" stroke="#707070" stroke-width="1.00" transform="rotate(45.0 8.00 8.00)"/><rect x="6.30" y="1.00" width="3.40" height="4.40" rx="1.50" fill="#ffffff" stroke="#707070" stroke-width="1.00" transform="rotate(90.0 8.00 8.00)"/><rect x="6.30" y="1.00" width="3.40" height="4.40" rx="1.50" fill="#ffffff" stroke="#707070" stroke-width="1.00" transform="rotate(135.0 8.00 8.00)"/><rect x="6.30" y="1.00" width="3.40" height="4.40" rx="1.50" fill="#ffffff" stroke="#707070" stroke-width="1.00" transform="rotate(180.0 8.00 8.00)"/><rect x="6.30" y="1.00" width="3.40" height="4.40" rx="1.50" fill="#ffffff" stroke="#707070" stroke-width="1.00" transform="rotate(225.0 8.00 8.00)"/><rect x="6.30" y="1.00" width="3.40" height="4.40" rx="1.50" fill="#ffffff" stroke="#707070" stroke-width="1.00" transform="rotate(270.0 8.00 8.00)"/><rect x="6.30" y="1.00" width="3.40" height="4.40" rx="1.50" fill="#ffffff" stroke="#707070" stroke-width="1.00" transform="rotate(315.0 8.00 8.00)"/><circle cx="8" cy="8" r="3.9" fill="#e4e4e4"/><circle cx="8" cy="8" r="1.9" fill="#f6f6f6" stroke="#6a6a6a" stroke-width="1"/></svg><span class="t" style="letter-spacing:0.25px">E-mail</span></div>
<div class="abs" id="sbtrack"></div>
<div class="abs" id="sbtop"></div>
<div class="abs" id="sbthumb"></div>
<div class="abs" id="sbarrow"></div>

<!-- RIGHT PANEL -->
<div class="abs" id="title"><span><b>Настройка параметров </b>детекции движения</span></div>

<div class="lbl" style="left:271px;top:53px;letter-spacing:0.25px;">Камера:</div>
<div class="lbl" style="left:271px;top:85px;letter-spacing:0.2px;">Режим А:</div>
<div class="sel2" style="left:428px;top:47px;width:158px;height:24px"><span class="v" style="left:2.6px;top:1px;line-height:22px;color:#000;font-size:13px;letter-spacing:-0.42px">Камера2</span><span class="d" style="height:22px;right:16px"></span><span class="ch" style="top:9px"><svg width="9" height="6" viewBox="0 0 9 6"><path d="M1.2 1.2 L4.5 4.3 L7.8 1.2" fill="none" stroke="#333" stroke-width="1.35"/></svg></span></div>
<div class="sel2" style="left:428px;top:79px;width:158px;height:24px"><span class="v" style="left:2.6px;top:1px;line-height:22px;color:#000;font-size:13px;letter-spacing:-0.31px">Нормальный режим</span><span class="d" style="height:22px;right:16px"></span><span class="ch" style="top:9px"><svg width="9" height="6" viewBox="0 0 9 6"><path d="M1.2 1.2 L4.5 4.3 L7.8 1.2" fill="none" stroke="#333" stroke-width="1.35"/></svg></span></div>
<div class="cb" style="left:595px;top:86px"><svg width="14" height="12" viewBox="0 0 14 12" style="position:absolute;left:0;top:-1px;overflow:visible"><path d="M2.2 6.2 L4.9 8.6 L10.2 1.2" fill="none" stroke="#c40a0a" stroke-width="1.9" stroke-linecap="round" stroke-linejoin="round"/></svg></div>
<div class="lbl" style="left:615px;top:86px;letter-spacing:0.14px;">Включите детекцию движения</div>
<div class="ib" style="left:630px"><svg width="20" height="20" viewBox="0 0 20 20"><rect x="4.6" y="5.2" width="9.8" height="9.2" rx="1.8" fill="none" stroke="#d4d4d4" stroke-width="1.6"/><rect x="10.2" y="8.6" width="7.5" height="7.5" fill="#0c0c0c"/><path d="M11.4 9.8 L16.6 14.8 M16.6 9.8 L11.4 14.8" stroke="#e51212" stroke-width="2"/></svg></div>
<div class="ib" style="left:660px"><svg width="20" height="20" viewBox="0 0 20 20"><path d="M3.6 5.8 Q3.6 5.2 4.4 5.2 H15.6 Q16.4 5.2 16.4 5.8 V7.8 H3.6 Z M7.6 3.6 H12.4 V5.4 H7.6 Z" fill="#d8502a"/><path d="M4.8 8.2 H15.2 L14.4 15.4 Q14.3 16 13.6 16 H6.4 Q5.7 16 5.6 15.4 Z" fill="#d8502a"/><path d="M7.7 9.6 V14.2 M10 9.6 V14.2 M12.3 9.6 V14.2" stroke="#f6d6c8" stroke-width="1.5"/></svg></div>
<div class="ib" style="left:690px"><svg width="20" height="20" viewBox="0 0 20 20"><defs><pattern id="rp" width="2" height="2" patternUnits="userSpaceOnUse"><rect width="2" height="2" fill="#e01212"/><rect x="1.3" y="1.3" width=".7" height=".7" fill="#5a0505"/></pattern></defs><rect x="1.5" y="1.5" width="17" height="17" fill="#e01212"/><rect x="1.5" y="1.5" width="17" height="17" fill="url(#rp)"/><rect x="5" y="5" width="10" height="10" fill="#980a0a" opacity=".4"/><rect x="7" y="7" width="6" height="6" fill="#980a0a" opacity=".3"/></svg></div>
<div class="cb" style="left:631px;top:153.5px"></div>
<div class="lbl" style="left:651px;top:153px;letter-spacing:0.2px;">Включите анализ динамического движения</div>
<div class="lbl" style="left:630px;top:182px;letter-spacing:0px;">Чувствительность:</div>
<div class="abs" style="left:792px;top:185px;width:100px;height:5px;border-radius:2.5px;background:linear-gradient(#8a8a8a,#747474 40%,#7c7c7c 70%,#9a9a9a)"></div>
<svg class="abs" style="left:866px;top:182px" width="11" height="14" viewBox="0 0 11 14"><defs><linearGradient id="sg" x1="0" x2="0" y1="0" y2="1"><stop offset="0" stop-color="#fdfdfd"/><stop offset=".6" stop-color="#e9e9e9"/><stop offset="1" stop-color="#c4c4c4"/></linearGradient></defs><path d="M1 1.5 Q1 .5 2 .5 H9 Q10 .5 10 1.5 V8.5 L5.5 12.8 L1 8.5 Z" fill="url(#sg)" stroke="#8e8e8e" stroke-width="1"/></svg>
<div class="lbl" style="left:630px;top:211px;letter-spacing:0.16px;">Включить расписание:</div>
<div class="sel2" style="left:788px;top:209px;width:108px;height:18px"><span class="v" style="left:2.8px;top:0px;line-height:16px;color:#000;font-size:12px;letter-spacing:0.03px">Шаблон дня</span><span class="d" style="height:16px;right:16px"></span><span class="ch" style="top:6px"><svg width="9" height="6" viewBox="0 0 9 6"><path d="M1.2 1.2 L4.5 4.3 L7.8 1.2" fill="none" stroke="#333" stroke-width="1.35"/></svg></span></div>
<div class="lbl" style="left:271px;top:407px;letter-spacing:0.15px;">Связать действия</div>
<div class="cb" style="left:273px;top:432px"></div>
<div class="lbl" style="left:293px;top:432px;letter-spacing:0.25px;">Предупреждение на мониторе</div>
<div class="cb" style="left:273px;top:457px"></div>
<div class="lbl" style="left:293px;top:457px;letter-spacing:0.13px;">Передать в центр</div>
<div class="cb" style="left:273px;top:483px"></div>
<div class="lbl" style="left:293px;top:483px;letter-spacing:0.17px;">Отправить захваченное изображение в облако</div>
<div class="cb" style="left:273px;top:512px"></div>
<div class="lbl" style="left:293px;top:512px;letter-spacing:0.17px;">Срабатывание тревожного выхода</div>
<div class="cb" style="left:570px;top:432px"></div>
<div class="lbl" style="left:590px;top:432px;letter-spacing:0px;">Звуковая тревога</div>
<div class="cb" style="left:570px;top:457px"></div>
<div class="lbl" style="left:590px;top:457px;letter-spacing:0.24px;">Связать E-mail</div>
<div class="sel2" style="left:569px;top:506px;width:148px;height:23px"><span class="v" style="left:3.2px;top:1px;line-height:21px;color:#8a8a96;font-size:13px;letter-spacing:-0.42px">Не выбран</span><span class="d" style="height:21px;right:16px"></span><span class="ch" style="top:8px"><svg width="9" height="6" viewBox="0 0 9 6"><path d="M1.2 1.2 L4.5 4.3 L7.8 1.2" fill="none" stroke="#a8a8a8" stroke-width="1.35"/></svg></span></div>
<div class="sel2" style="left:569px;top:537px;width:148px;height:24px"><span class="v" style="left:3.2px;top:1px;line-height:22px;color:#000;font-size:13px;letter-spacing:-0.3px">Камера02</span><span class="d" style="height:22px;right:16px"></span><span class="ch" style="top:9px"><svg width="9" height="6" viewBox="0 0 9 6"><path d="M1.2 1.2 L4.5 4.3 L7.8 1.2" fill="none" stroke="#333" stroke-width="1.35"/></svg></span></div>
<div class="lbl" style="left:271px;top:543px;letter-spacing:0.1px;">Запуск записи:</div>
<div class="abs" id="cam"><svg width="352" height="288" viewBox="0 0 352 288">
<defs>
<linearGradient id="lw" x1="0" x2="1" y1="0" y2="0"><stop offset="0" stop-color="#5e6878"/><stop offset=".35" stop-color="#727c8c"/><stop offset=".7" stop-color="#8a94a2"/><stop offset="1" stop-color="#b0b8c2"/></linearGradient>
<linearGradient id="topb" x1="0" x2="1" y1="0" y2="0"><stop offset="0" stop-color="#222a33"/><stop offset=".18" stop-color="#333a42"/><stop offset=".36" stop-color="#5b626a"/><stop offset=".46" stop-color="#9198a0"/><stop offset=".54" stop-color="#8a9098"/><stop offset=".62" stop-color="#6a7078"/><stop offset=".74" stop-color="#50565e"/><stop offset=".8" stop-color="#2c323a"/><stop offset="1" stop-color="#262c34"/></linearGradient>
<linearGradient id="roof" gradientUnits="userSpaceOnUse" x1="0" x2="256" y1="0" y2="0"><stop offset="0" stop-color="#414852"/><stop offset=".19" stop-color="#565d68"/><stop offset=".38" stop-color="#727985"/><stop offset=".5" stop-color="#959ca6"/><stop offset=".62" stop-color="#a3a9b3"/><stop offset=".74" stop-color="#7a818c"/><stop offset=".86" stop-color="#5c636e"/><stop offset="1" stop-color="#434a55"/></linearGradient>
<linearGradient id="bw" x1="0" x2="1" y1="0" y2="0"><stop offset="0" stop-color="#838b97"/><stop offset=".5" stop-color="#6e7684"/><stop offset=".8" stop-color="#566070"/><stop offset="1" stop-color="#465060"/></linearGradient>
<linearGradient id="door" gradientUnits="userSpaceOnUse" x1="0" x2="0" y1="14" y2="288"><stop offset="0" stop-color="#323a46"/><stop offset=".2" stop-color="#414957"/><stop offset=".32" stop-color="#59616f"/><stop offset=".45" stop-color="#6f7787"/><stop offset=".55" stop-color="#8d95a4"/><stop offset=".66" stop-color="#a7aebb"/><stop offset=".8" stop-color="#b2b8c3"/><stop offset="1" stop-color="#aab0bb"/></linearGradient>
<linearGradient id="fl" gradientUnits="userSpaceOnUse" x1="104" x2="256" y1="0" y2="0"><stop offset="0" stop-color="#2c323b"/><stop offset=".12" stop-color="#323944"/><stop offset=".22" stop-color="#48505c"/><stop offset=".32" stop-color="#7a8492"/><stop offset=".44" stop-color="#a0a9b7"/><stop offset=".6" stop-color="#aeb7c4"/><stop offset="1" stop-color="#a8b1bf"/></linearGradient>
<linearGradient id="fld" x1="0" x2="0" y1="0" y2="1"><stop offset="0" stop-color="#fff" stop-opacity=".12"/><stop offset="1" stop-color="#000" stop-opacity=".1"/></linearGradient>
<linearGradient id="plast" x1="0" x2="1" y1="0" y2="1"><stop offset="0" stop-color="#5a6270"/><stop offset=".5" stop-color="#747c8c"/><stop offset="1" stop-color="#5e6674"/></linearGradient>
<pattern id="cor" width="5.3" height="8" patternUnits="userSpaceOnUse"><rect x="0" y="0" width="1.8" height="8" fill="#1c2230" opacity=".3"/><rect x="2.8" y="0" width="1.2" height="8" fill="#fff" opacity=".1"/></pattern>
<pattern id="cor3" width="9" height="8" patternUnits="userSpaceOnUse" patternTransform="skewX(-6)"><rect x="0" y="0" width="1.6" height="8" fill="#1c222c" opacity=".22"/></pattern>
<pattern id="cor2" width="7" height="8" patternUnits="userSpaceOnUse"><rect x="0" y="0" width="2.4" height="8" fill="#1c222c" opacity=".3"/></pattern>
<pattern id="grid" width="16" height="16" patternUnits="userSpaceOnUse"><path d="M0 0H16M0 0V16" stroke="#2a62b2" stroke-width="2" fill="none"/></pattern>
<filter id="bl" x="-2%" y="-2%" width="104%" height="104%"><feGaussianBlur stdDeviation="0.7"/></filter>
<filter id="bl2" x="-10%" y="-10%" width="120%" height="120%"><feGaussianBlur stdDeviation="2.2"/></filter>
<linearGradient id="p1" gradientUnits="userSpaceOnUse" x1="0" x2="0" y1="128" y2="206"><stop offset="0" stop-color="#70758c"/><stop offset=".3" stop-color="#4c5064"/><stop offset=".6" stop-color="#3a3d4c"/><stop offset="1" stop-color="#343744"/></linearGradient>
</defs>
<g filter="url(#bl)">
<rect width="352" height="288" fill="#222932"/>
<!-- top band -->
<rect x="0" y="0" width="352" height="14" fill="url(#topb)"/>
<!-- roof underside (curved light band) -->
<path d="M0 58 L16 48 L34 46 L46 34 L96 31 L112 27 L130 24 L176 24 L210 24 L256 20 L256 40 L200 34 L176 48 L130 50 L96 60 L64 70 L32 82 L0 94 Z" fill="url(#roof)"/>
<g stroke="#c4cad2" stroke-width="1.6" opacity=".45" fill="none"><path d="M128 44 L172 26"/><path d="M128 36 L160 25"/><path d="M136 48 L182 28"/><path d="M128 10 L176 1"/><path d="M140 11 L190 2"/><path d="M150 12 L200 4"/><path d="M100 46 L128 34"/><path d="M104 54 L128 44"/></g>
<!-- area below top-left beam, left part -->
<path d="M0 48 L16 46 L34 46 L0 62 Z" fill="#2e353d"/>
<!-- back wall right of the roof (x 176..256) -->
<path d="M176 48 L200 34 L226 30 L258 30 L258 94 L240 87 L224 82 L192 77 L160 70 L130 64 L130 50 Z" fill="url(#bw)"/>
<path d="M176 48 L200 34 L226 30 L258 30 L258 94 L240 87 L224 82 L192 77 L160 70 L130 64 L130 50 Z" fill="url(#cor2)"/>
<!-- dark top beam -->
<path d="M0 13 L130 13 L130 24 L112 27 L96 31 L46 34 L34 46 L0 50 Z" fill="#222933"/><path d="M130 13 L256 15 L256 20 L130 23 Z" fill="#2e353f"/>
<!-- left wall -->
<path d="M0 96 L32 84 L64 74 L96 64 L130 54 L130 210 L118 288 L0 288 Z" fill="url(#lw)"/>
<path d="M0 96 L32 84 L64 74 L96 64 L130 54 L130 210 L118 288 L0 288 Z" fill="url(#cor)"/>
<!-- lower roof beam -->
<path d="M0 86 L22 82 L44 72 L66 65 L87 58 L109 52 L130 47 L130 53 L109 58 L87 64 L66 71 L44 78 L22 88 L0 93 Z" fill="#2b323b"/><path d="M0 96 L32 84 L64 74 L96 64 L130 54 L130 62 L96 76 L64 90 L32 104 L0 116 Z" fill="#2a313c" opacity=".45"/><path d="M0 116 L32 104 L64 90 L96 76 L130 62 L130 72 L96 88 L64 104 L32 120 L0 134 Z" fill="#2a313c" opacity=".2"/>
<!-- diagonal brace -->
<path d="M0 168 L128 98 L128 103 L0 174 Z" fill="#3a414c" opacity=".75"/>
<!-- right dark region -->
<path d="M300 14 L352 14 L352 288 L300 288 Z" fill="#20262e"/>
<!-- bright opening -->
<path d="M130 64 L160 70 L192 77 L224 82 L240 87 L256 93 L277 99 L272 140 L266 186 L258 232 L250 254 L128 254 L130 200 Z" fill="#dfe5f0"/>
<path d="M130 59 L160 65 L192 72 L224 77 L240 82 L256 88 L278 94 L277 99 L256 93 L240 87 L224 82 L192 77 L160 70 L130 64 Z" fill="#394150"/>
<!-- opening top-left greenish structure -->
<path d="M132 74 L150 70 L200 82 L214 88 L170 88 L150 86 L132 92 Z" fill="#cdd4cf" opacity=".75"/>
<!-- door frame left -->
<rect x="128" y="64" width="4" height="150" fill="#5a6068"/>
<!-- floor -->
<path d="M104 214 L130 200 L144 200 L162 206 L250 254 L244 272 L240 288 L60 288 L60 262 Z" fill="url(#fl)"/>
<path d="M150 200 L162 206 L250 254 L244 272 L240 288 L150 288 Z" fill="url(#fld)"/>
<path d="M176 208 L262 208 L256 236 L250 252 Z" fill="#c3ccda" opacity=".55"/>
<!-- threshold -->
<path d="M160 204 L250 252 L249 256 L158 208 Z" fill="#eef1f7"/>
<path d="M158 208 L249 256 L248 258 L157 210 Z" fill="#6f7782" opacity=".8"/>
<!-- dark strip right of door (drawn first, door overlaps) -->
<path d="M300 14 L322 14 L324 100 L320 150 L318 214 L314 288 L284 288 L296 240 L303 196 Z" fill="#353d4a"/>
<!-- stairs area -->
<path d="M318 118 L338 110 L340 222 L316 226 Z" fill="#3b3b33"/>
<g stroke="#cfc9a4" stroke-width="2" opacity=".7"><path d="M319 136 L337 131"/><path d="M319 150 L337 145"/><path d="M319 164 L338 159"/><path d="M318 178 L338 173"/><path d="M318 192 L338 187"/><path d="M318 206 L338 201"/></g>
<!-- brown under stairs -->
<path d="M303 210 L318 214 L314 288 L284 288 L296 240 Z" fill="#57493a"/>
<!-- plastic sheet -->
<path d="M316 226 L340 218 L352 206 L352 288 L312 288 Z" fill="url(#plast)"/><path d="M322 250 L338 226 L344 232 L324 278 Z" fill="#aab2c0" opacity=".35"/>
<path d="M340 100 L352 110 L352 206 L340 218 Z" fill="#23292f"/>
<!-- right door leaf / tall wall -->
<path d="M256 14 L304 14 L308 60 L306 100 L305 150 L303 196 L296 240 L284 288 L240 288 L246 268 L258 232 L266 186 L272 140 L277 99 L256 93 Z" fill="url(#door)"/>
<path d="M256 14 L304 14 L308 60 L306 100 L305 150 L303 196 L296 240 L284 288 L240 288 L246 268 L258 232 L266 186 L272 140 L277 99 L256 93 Z" fill="url(#cor3)"/>
<!-- diagonal beam top right -->
<path d="M306 0 L326 0 L352 110 L352 196 L342 196 L334 110 Z" fill="#353e48"/>
<!-- door handle recess -->
<path d="M283 158 L300 163 L299 169 L282 164 Z" fill="#3f4756"/>
<!-- door bottom dark -->
<path d="M240 288 L244 272 L250 256 L258 258 L270 288 Z" fill="#2b3139"/>
<!-- wall bottom-left dark edge -->
<path d="M0 192 L8 196 L36 288 L16 288 L0 210 Z" fill="#3a414b"/>
<!-- lavender strip at left edge -->
<path d="M0 206 L6 208 L14 240 L26 288 L0 288 Z" fill="#c3cad9"/>
<path d="M0 256 L3 256 L9 288 L0 288 Z" fill="#141a3c"/>
<!-- whitish debris -->
<path d="M34 268 L42 258 L47 288 L38 288 Z" fill="#9a9a94" opacity=".6"/>
<path d="M36 250 L48 244 L60 288 L44 288 Z" fill="#2e343c" opacity=".55"/>
<!-- standing pallet -->
<g fill="none" stroke="#bcae8e" stroke-width="4"><path d="M89 168 L115 154"/><path d="M91 168 L98 214"/><path d="M101 162 L108 220"/><path d="M112 156 L121 214"/><path d="M96 196 L118 184"/><path d="M100 220 L126 208"/></g>
<!-- pallets stack -->
<path d="M48 222 L87 198 L108 216 L114 246 L84 288 L66 288 L52 248 Z" fill="#3e3424"/>
<g stroke="#93835f" stroke-width="2.8" fill="none"><path d="M50 224 L90 201"/><path d="M51 232 L98 206"/><path d="M52 240 L104 212"/><path d="M54 248 L108 220"/><path d="M57 256 L110 228"/><path d="M60 264 L112 236"/><path d="M63 272 L113 244"/><path d="M67 280 L106 257"/><path d="M72 287 L98 270"/></g>
<path d="M87 198 L108 216 L114 246 L108 252 L102 222 L84 204 Z" fill="#a08f6a" opacity=".7"/>
<!-- people -->
<path d="M145.5 130 L147.5 135 Q152 138 152 144 Q155 147 155 153 L155 176 Q154 186 152 190 L152 201 L147 202 L146 190 L144 202 L138 200 L138 188 Q134 180 134 168 L135 152 Q136 146 140 143 Q140 137 144 135 Z" fill="url(#p1)"/>
<path d="M156 151 Q156 146 159.5 146 Q163 146 163.5 151 L164 154 L170 158 Q172 166 172 176 L170 182 L171 207 L165 207 L163 188 L161 205 L156 204 L155 182 L153 176 L154 160 Z" fill="#3a3e50"/>
<path d="M155 160 L163 154 L169.5 158 L170 165 L162 168 L154.5 168 Z" fill="#3d82e2"/>
<!-- door frame shadow -->
<rect x="122" y="100" width="7" height="108" fill="#4a5058" opacity=".7"/>
<!-- small highlight top right -->
<path d="M315.5 20 L318 20 L318 30 L316.5 36 Z" fill="#e8ecff"/>
<path d="M313 66 L314 66 L311.5 90 L311 90 Z" fill="#aab2c0" opacity=".7"/>
<!-- texts -->
<text x="6.5" y="21.6" font-family="Liberation Mono, monospace" font-weight="bold" font-size="6.9" fill="#f4f6fa" textLength="88" lengthAdjust="spacingAndGlyphs">01-28-2025 Вт 10:00:41</text>
<text x="258" y="262" font-family="Liberation Mono, monospace" font-weight="bold" font-size="6" fill="#fff" textLength="33" lengthAdjust="spacingAndGlyphs">Camera 02</text>
</g>
<!-- grid -->
<path d="M0 0V288M16 0V288M32 0V288M48 0V288M64 0V288M80 0V288M96 0V288M112 0V288M128 0V288M144 0V288M160 0V288M176 0V288M192 0V288M208 0V288M224 0V288M240 0V288M256 0V288M272 0V288M288 0V288M304 0V288M320 0V288M336 0V288M352 0V288M0 0H352M0 16H352M0 32H352M0 48H352M0 64H352M0 80H352M0 96H352M0 112H352M0 128H352M0 144H352M0 160H352M0 176H352M0 192H352M0 208H352M0 224H352M0 240H352M0 256H352M0 272H352M0 288H352" stroke="#2b62b3" stroke-width="2" fill="none" shape-rendering="crispEdges"/>
</svg>
</div>

<div class="abs" id="hr"></div>
<div class="abs" id="save">Сохранить</div>
</body>
</html>
